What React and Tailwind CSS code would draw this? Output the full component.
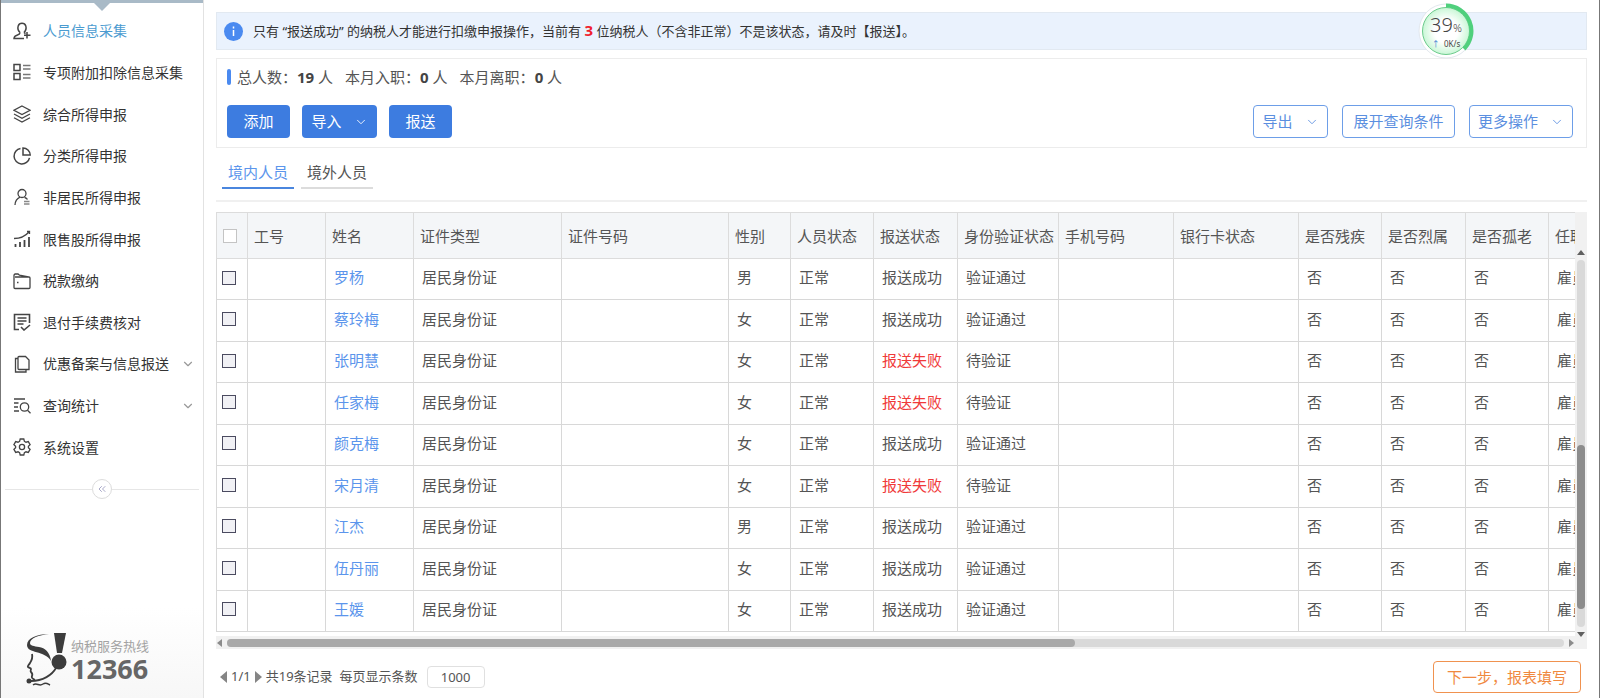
import { useState } from "react";
import { ChevronDown, ChevronsLeft } from "lucide-react";

const menu = [
  { id: "person", label: "人员信息采集", active: true },
  { id: "special", label: "专项附加扣除信息采集" },
  { id: "layers", label: "综合所得申报" },
  { id: "pie", label: "分类所得申报" },
  { id: "foreign", label: "非居民所得申报" },
  { id: "stock", label: "限售股所得申报" },
  { id: "wallet", label: "税款缴纳" },
  { id: "refund", label: "退付手续费核对" },
  { id: "copy", label: "优惠备案与信息报送", more: true },
  { id: "search", label: "查询统计", more: true },
  { id: "gear", label: "系统设置" },
];

const icons = {
  person: (
    <>
      <path
        d="M7 10.500C4.800 8.500 4.600 6 5.200 3.900C5.800 2 7.200 1.200 9 1.200s3.200.8 3.800 2.700c.6 2.100.2 4.600-1.800 6.600"
        strokeWidth="1.500"
      />
      <path
        d="M7 10.500c0 1.500-.8 2-2.500 2.500S1.200 14 1 16.500h10M11 10.500l1.500 1.200M14 10v6.500M11 13.300h6.500"
        strokeWidth="1.500"
      />
    </>
  ),
  special: (
    <>
      <path d="M1 1.500h6v6H1zM1 10.500h6v6H1z" strokeWidth="1.500" />
      <path
        d="M10 2.500h7.500M10 6h7.500M10 11.500h7.500M10 15h7.500"
        stroke="#777"
      />
    </>
  ),
  layers: (
    <path d="M9 1l8 4.300-8 4.300-8-4.300zM1 9l8 4.300L17 9M1 12.700L9 17l8-4.300" />
  ),
  pie: (
    <path
      d="M7.500 1.500A7.800 7.800 0 1 0 16.500 10.800M10 1v7h7.200A7.300 7.300 0 0 0 10 1z"
      strokeWidth="1.500"
    />
  ),
  foreign: (
    <>
      <circle cx="9" cy="5.500" r="4" />
      <path d="M2 17c.2-4 1.600-6.200 5-7.800M11.500 9.300c1.500.6 2.500 1.300 3 2.200" />
      <path d="M11 13.500h5.500M11 16h5.500" stroke="#888" />
    </>
  ),
  stock: (
    <>
      <path d="M1 8.500C7 8.500 12 6.500 16 2M14 1.500h2.500v2.500" />
      <path d="M2.500 17v-3M7 17v-5M11.500 17V10M16 17V7" strokeWidth="1.800" />
    </>
  ),
  wallet: (
    <>
      <path d="M2 5h14a1 1 0 0 1 1 1v9.500a1 1 0 0 1-1 1H2a1 1 0 0 1-1-1V3l1-1h3l1.500 1.200L15.500 4.800" />
      <path d="M4 10.500h1.500" />
    </>
  ),
  refund: (
    <>
      <path d="M16.500 10V1.500H1.500v15H6" strokeWidth="1.600" />
      <path d="M4.500 5h9M4.500 8h9M4.500 11h6M8 14l3 3 6-5" strokeWidth="1.600" />
    </>
  ),
  copy: (
    <>
      <path d="M6 1.500h6.500l3.500 3.500v9.500H6a1 1 0 0 1-1-1v-11a1 1 0 0 1 1-1z" />
      <path d="M5 3.500H2.500v13.500H13v-2.500" />
    </>
  ),
  search: (
    <>
      <path d="M1 2h11M1 6h4.500M1 10h4M1 14h5" />
      <circle cx="11.500" cy="10" r="4.200" />
      <path d="M14.500 13.200l3 3" />
    </>
  ),
  gear: (
    <>
      <path d="M7.200 1h3.600l.6 2.300 1.600.9 2.300-.6 1.800 3.100L15.400 8.300v1.400l1.700 1.600-1.800 3.100-2.300-.6-1.600.9-.6 2.300H7.200l-.6-2.300-1.600-.9-2.300.6L.9 11.300 2.600 9.700V8.300L.9 6.700l1.800-3.100 2.300.6 1.600-.9z" />
      <circle cx="9" cy="9" r="2.600" />
    </>
  ),
};

const columns = [
  { label: "工号", width: 78 },
  { label: "姓名", width: 88 },
  { label: "证件类型", width: 148 },
  { label: "证件号码", width: 167 },
  { label: "性别", width: 62 },
  { label: "人员状态", width: 83 },
  { label: "报送状态", width: 84 },
  { label: "身份验证状态", width: 101 },
  { label: "手机号码", width: 115 },
  { label: "银行卡状态", width: 125 },
  { label: "是否残疾", width: 83 },
  { label: "是否烈属", width: 84 },
  { label: "是否孤老", width: 83 },
  { label: "任职受雇从业类型", width: 140 },
];

const people = [
  { name: "罗杨", sex: "男", ok: true },
  { name: "蔡玲梅", sex: "女", ok: true },
  { name: "张明慧", sex: "女", ok: false },
  { name: "任家梅", sex: "女", ok: false },
  { name: "颜克梅", sex: "女", ok: true },
  { name: "宋月清", sex: "女", ok: false },
  { name: "江杰", sex: "男", ok: true },
  { name: "伍丹丽", sex: "女", ok: true },
  { name: "王媛", sex: "女", ok: true },
];

const Sidebar = () => (
  <aside className="w-[203px] shrink-0 flex flex-col border-r border-[#e2e2e2]">
    <div className="relative h-[3px] bg-[#a9bac7]">
      <svg
        className="absolute left-[93px] top-[3px]"
        width="16"
        height="8"
        viewBox="0 0 16 8"
      >
        <path d="M0 0h16L8 8z" fill="#a9bac7" />
      </svg>
    </div>
    {/* Пункты меню */}
    <nav className="mt-[7px] h-[458px] flex flex-col">
      {menu.map((item) => (
        <a
          key={item.id}
          href="#"
          className={`flex-1 flex items-center gap-3 pl-3 pr-2 text-[14px] ${
            item.active ? "text-[#4b9bd0]" : "text-[#333]"
          }`}
        >
          <svg
            className="shrink-0 text-[#444]"
            width="18"
            height="18"
            viewBox="0 0 18 18"
            fill="none"
            stroke="currentColor"
            strokeWidth="1.300"
          >
            {icons[item.id]}
          </svg>
          <span className="flex-1 whitespace-nowrap">{item.label}</span>
          {item.more && (
            <ChevronDown size={14} strokeWidth={2} className="text-[#999]" />
          )}
        </a>
      ))}
    </nav>
    <div className="flex items-center px-1 mt-[11px]">
      <div className="flex-1 h-px bg-[#e6e6e6]" />
      <button
        aria-label="收起"
        className="w-5 h-5 rounded-full border border-[#dcdcdc] flex items-center justify-center text-[#a9a9c8]"
      >
        <ChevronsLeft size={12} />
      </button>
      <div className="flex-1 h-px bg-[#e6e6e6]" />
    </div>
    <Hotline />
  </aside>
);

const Hotline = () => (
  <div className="mt-auto flex items-center gap-1 pl-6 pb-2.5 pt-6 bg-linear-to-b from-white to-[#f7f7f7]">
    <svg width="42" height="56" viewBox="0 0 42 56" fill="none">
      <path
        d="M24 2C12 2 2 6 2 13c0 9 18 5 24 16-1-9-6-13-12-14C9 14 5 14 5 11c0-5 9-8 19-9z"
        fill="#3c3c3c"
      />
      <path d="M29 1h12l-4 20h-5z" fill="#3c3c3c" />
      <circle cx="34" cy="30" r="7.500" fill="#3c3c3c" />
      <path
        d="M7 22c1 4 0 6-2 9-1 2-3 3-2 4s3 1 3 2-1 2 0 3 2 2 1 4 1 3 3 4"
        stroke="#3c3c3c"
        strokeWidth="1.800"
      />
      <path d="M31 36C27 43 18 49 6 49" stroke="#3c3c3c" strokeWidth="1.800" />
      <circle cx="4" cy="49" r="2.500" fill="#3c3c3c" />
      <path
        d="M8 53c4-3 6 2 10-1 3-2 5 0 7 1"
        stroke="#3c3c3c"
        strokeWidth="1.500"
      />
    </svg>
    <div>
      <div className="text-[13px] leading-[18px] text-[#a3a3a3]">
        纳税服务热线
      </div>
      <div className="text-[27px] leading-7 font-bold text-[#666]">12366</div>
    </div>
  </div>
);

const SpeedBall = () => (
  <div className="absolute left-[1201px] top-[-10px] w-[56px] h-[56px]">
    <svg className="absolute inset-0" width="56" height="56" viewBox="0 0 56 56">
      <defs>
        <radialGradient id="ball">
          <stop offset="0.500" stopColor="#fff" />
          <stop offset="1" stopColor="#c9f7d6" />
        </radialGradient>
      </defs>
      <circle cx="28" cy="28" r="27" fill="#fff" stroke="#e3e8ee" />
      <circle cx="28" cy="28" r="23.500" fill="url(#ball)" stroke="#6ccb8c" />
      <path
        d="M28 2.500A25.500 25.500 0 0 1 46 46"
        fill="none"
        stroke="#4fd07c"
        strokeWidth="4"
      />
    </svg>
    <div className="relative pt-3 text-center text-[#444]">
      <div className="text-[20px] leading-5 font-light">
        39<span className="text-[11px]">%</span>
      </div>
      <div className="text-[8px] leading-3">
        <span className="text-[#3b7fd0]">↑</span>&nbsp; 0K/s
      </div>
    </div>
  </div>
);

const Check = ({ label, head }) => (
  <input
    type="checkbox"
    aria-label={label}
    className={`appearance-none block w-[14px] h-[14px] border ${
      head ? "bg-white border-[#c4c4c4]" : "bg-[#f1f1f5] border-[#4b4b60]"
    }`}
  />
);

const Cell = ({ children, className = "" }) => (
  <td className={`border border-[#d8d8d8] pl-2 pb-[3px] ${className}`}>
    {children}
  </td>
);

const PeopleTable = () => (
  <div className="flex-1 min-w-0 overflow-hidden">
    <table className="table-fixed w-[1472px] h-[420px] border-collapse text-[15px] text-[#555] text-left whitespace-nowrap">
      <colgroup>
        <col style={{ width: 31 }} />
        {columns.map((col) => (
          <col key={col.label} style={{ width: col.width }} />
        ))}
      </colgroup>
      <thead>
        <tr className="h-[46px] bg-[#f4f6f8]">
          <th className="border border-[#dcdcdc] pl-1.5">
            <Check label="全选" head />
          </th>
          {columns.map((col) => (
            <th
              key={col.label}
              className="border border-[#dcdcdc] pl-1.5 pt-0.5 font-normal"
            >
              {col.label}
            </th>
          ))}
        </tr>
      </thead>
      <tbody>
        {people.map((p) => (
          <tr key={p.name}>
            <td className="border border-[#d8d8d8] pl-[5px] pb-[3px]">
              <Check label={p.name} />
            </td>
            <Cell />
            <Cell>
              <a href="#" className="text-[#5b95ec]">
                {p.name}
              </a>
            </Cell>
            <Cell>居民身份证</Cell>
            <Cell />
            <Cell>{p.sex}</Cell>
            <Cell>正常</Cell>
            <Cell className={p.ok ? "" : "text-[#f03a3a]"}>
              {p.ok ? "报送成功" : "报送失败"}
            </Cell>
            <Cell>{p.ok ? "验证通过" : "待验证"}</Cell>
            <Cell />
            <Cell />
            <Cell>否</Cell>
            <Cell>否</Cell>
            <Cell>否</Cell>
            <Cell>雇员</Cell>
          </tr>
        ))}
      </tbody>
    </table>
    {/* Горизонтальная прокрутка */}
    <div className="mt-1 h-[13px] flex items-center gap-1 bg-[#f1f1f1]">
      <svg width="7" height="8" viewBox="0 0 7 8">
        <path d="M6 0v8L1 4z" fill="#8c8c8c" />
      </svg>
      <div className="flex-1 h-2 rounded-full bg-[#d9d9d9]">
        <div className="w-[63.4%] h-2 rounded-full bg-[#a9a9a9]" />
      </div>
      <svg width="7" height="8" viewBox="0 0 7 8">
        <path d="M1 0v8l5-4z" fill="#8c8c8c" />
      </svg>
    </div>
  </div>
);

const App = () => {
  const [tab, setTab] = useState("in");
  const [pageSize, setPageSize] = useState("1000");

  const tabClass = (name) =>
    `w-[72px] h-[33px] pt-0.5 text-[15px] border-b-2 ${
      tab === name
        ? "text-[#5b95ec] border-[#4a86de]"
        : "text-[#555] border-[#dcdcdc]"
    }`;

  return (
    <div className="min-h-screen flex overflow-hidden bg-white border-x border-l-[#777] border-r-[#777] font-['Noto_Sans','Noto_Sans_CJK_SC',sans-serif] text-[#555]">
      <Sidebar />
      <main className="flex-1 min-w-0 px-3 pt-3 flex flex-col">
        <div className="relative h-[38px] flex items-center gap-2.5 pl-[7px] bg-[#eaf2fd] border border-[#e2e9f1] text-[13px] text-[#333]">
          <svg width="19" height="19" viewBox="0 0 19 19">
            <circle cx="9.500" cy="9.500" r="9.500" fill="#4a8af0" />
            <path d="M9.500 8v6M9.500 4.500v2" stroke="#fff" strokeWidth="1.500" />
          </svg>
          <p>
            只有 “报送成功” 的纳税人才能进行扣缴申报操作，当前有{" "}
            <b className="text-[15px] leading-5 text-[#f0202c]">3</b>{" "}
            位纳税人（不含非正常）不是该状态，请及时【报送】。
          </p>
          <SpeedBall />
        </div>

        <section className="mt-2 h-[90px] pt-2 px-2.5 border border-[#ececec]">
          <div className="flex items-center text-[15px] leading-5">
            <span className="w-1 h-4 mr-1.5 rounded-full bg-[#4a8af0]" />
            <span>
              总人数：<b className="text-[#444]">19</b> 人
            </span>
            <span className="ml-3">
              本月入职：<b className="text-[#444]">0</b> 人
            </span>
            <span className="ml-3">
              本月离职：<b className="text-[#444]">0</b> 人
            </span>
          </div>
          <div className="mt-[18px] flex text-[15px]">
            <button className="w-[63px] h-[33px] rounded bg-[#3d7ce0] text-white">
              添加
            </button>
            <button className="ml-3 w-[75px] h-[33px] rounded bg-[#3d7ce0] text-white flex items-center justify-center gap-3">
              导入
              <ChevronDown size={14} strokeWidth={1.5} />
            </button>
            <button className="ml-3 w-[63px] h-[33px] rounded bg-[#3d7ce0] text-white">
              报送
            </button>
            <div className="ml-auto mr-[3px] flex gap-3.5 text-[#5b8fe0]">
              <button className="w-[75px] h-[33px] rounded border border-[#6d9ee8] flex items-center justify-center gap-3">
                导出
                <ChevronDown size={14} strokeWidth={1.5} />
              </button>
              <button className="w-[113px] h-[33px] rounded border border-[#6d9ee8]">
                展开查询条件
              </button>
              <button className="w-[104px] h-[33px] rounded border border-[#6d9ee8] flex items-center justify-center gap-3">
                更多操作
                <ChevronDown size={14} strokeWidth={1.5} />
              </button>
            </div>
          </div>
        </section>

        <div className="mt-2 pl-1.5 pb-[11px] flex gap-[7px] border-b-2 border-[#f0f0f0]">
          <button className={tabClass("in")} onClick={() => setTab("in")}>
            境内人员
          </button>
          <button className={tabClass("out")} onClick={() => setTab("out")}>
            境外人员
          </button>
        </div>

        <div className="mt-2.5 flex">
          <PeopleTable />
          {/* Вертикальная прокрутка */}
          <div className="w-3 shrink-0 pt-[38px] pb-3 bg-[#f1f1f1] flex flex-col items-center gap-1">
            <svg width="8" height="6" viewBox="0 0 8 6">
              <path d="M0 5h8L4 0z" fill="#606060" />
            </svg>
            <div className="flex-1 w-2 rounded-full bg-[#d9d9d9] flex flex-col justify-end pb-[18px]">
              <div className="w-2 h-[47%] rounded-full bg-[#8c8c8c]" />
            </div>
            <svg width="8" height="6" viewBox="0 0 8 6">
              <path d="M0 1h8L4 6z" fill="#606060" />
            </svg>
          </div>
        </div>

        <footer className="mt-3 mr-1.5 flex items-center text-[13px]">
          <div className="flex items-center gap-1 pl-1">
            <button aria-label="上一页">
              <svg width="7" height="12" viewBox="0 0 7 12">
                <path d="M7 0v12L0 6z" fill="#858585" />
              </svg>
            </button>
            <span>1/1</span>
            <button aria-label="下一页">
              <svg width="7" height="12" viewBox="0 0 7 12">
                <path d="M0 0v12l7-6z" fill="#858585" />
              </svg>
            </button>
            <span>共19条记录</span>
          </div>
          <label htmlFor="page-size" className="ml-[7px]">
            每页显示条数
          </label>
          <input
            id="page-size"
            value={pageSize}
            onChange={(e) => setPageSize(e.target.value)}
            className="ml-[9px] w-[58px] h-[22px] text-center rounded border border-[#e0e0e0]"
          />
          <button className="ml-auto w-[148px] h-8 rounded border border-[#f0924f] text-[15px] text-[#f0893f]">
            下一步，报表填写
          </button>
        </footer>
      </main>
    </div>
  );
};

export default App;
